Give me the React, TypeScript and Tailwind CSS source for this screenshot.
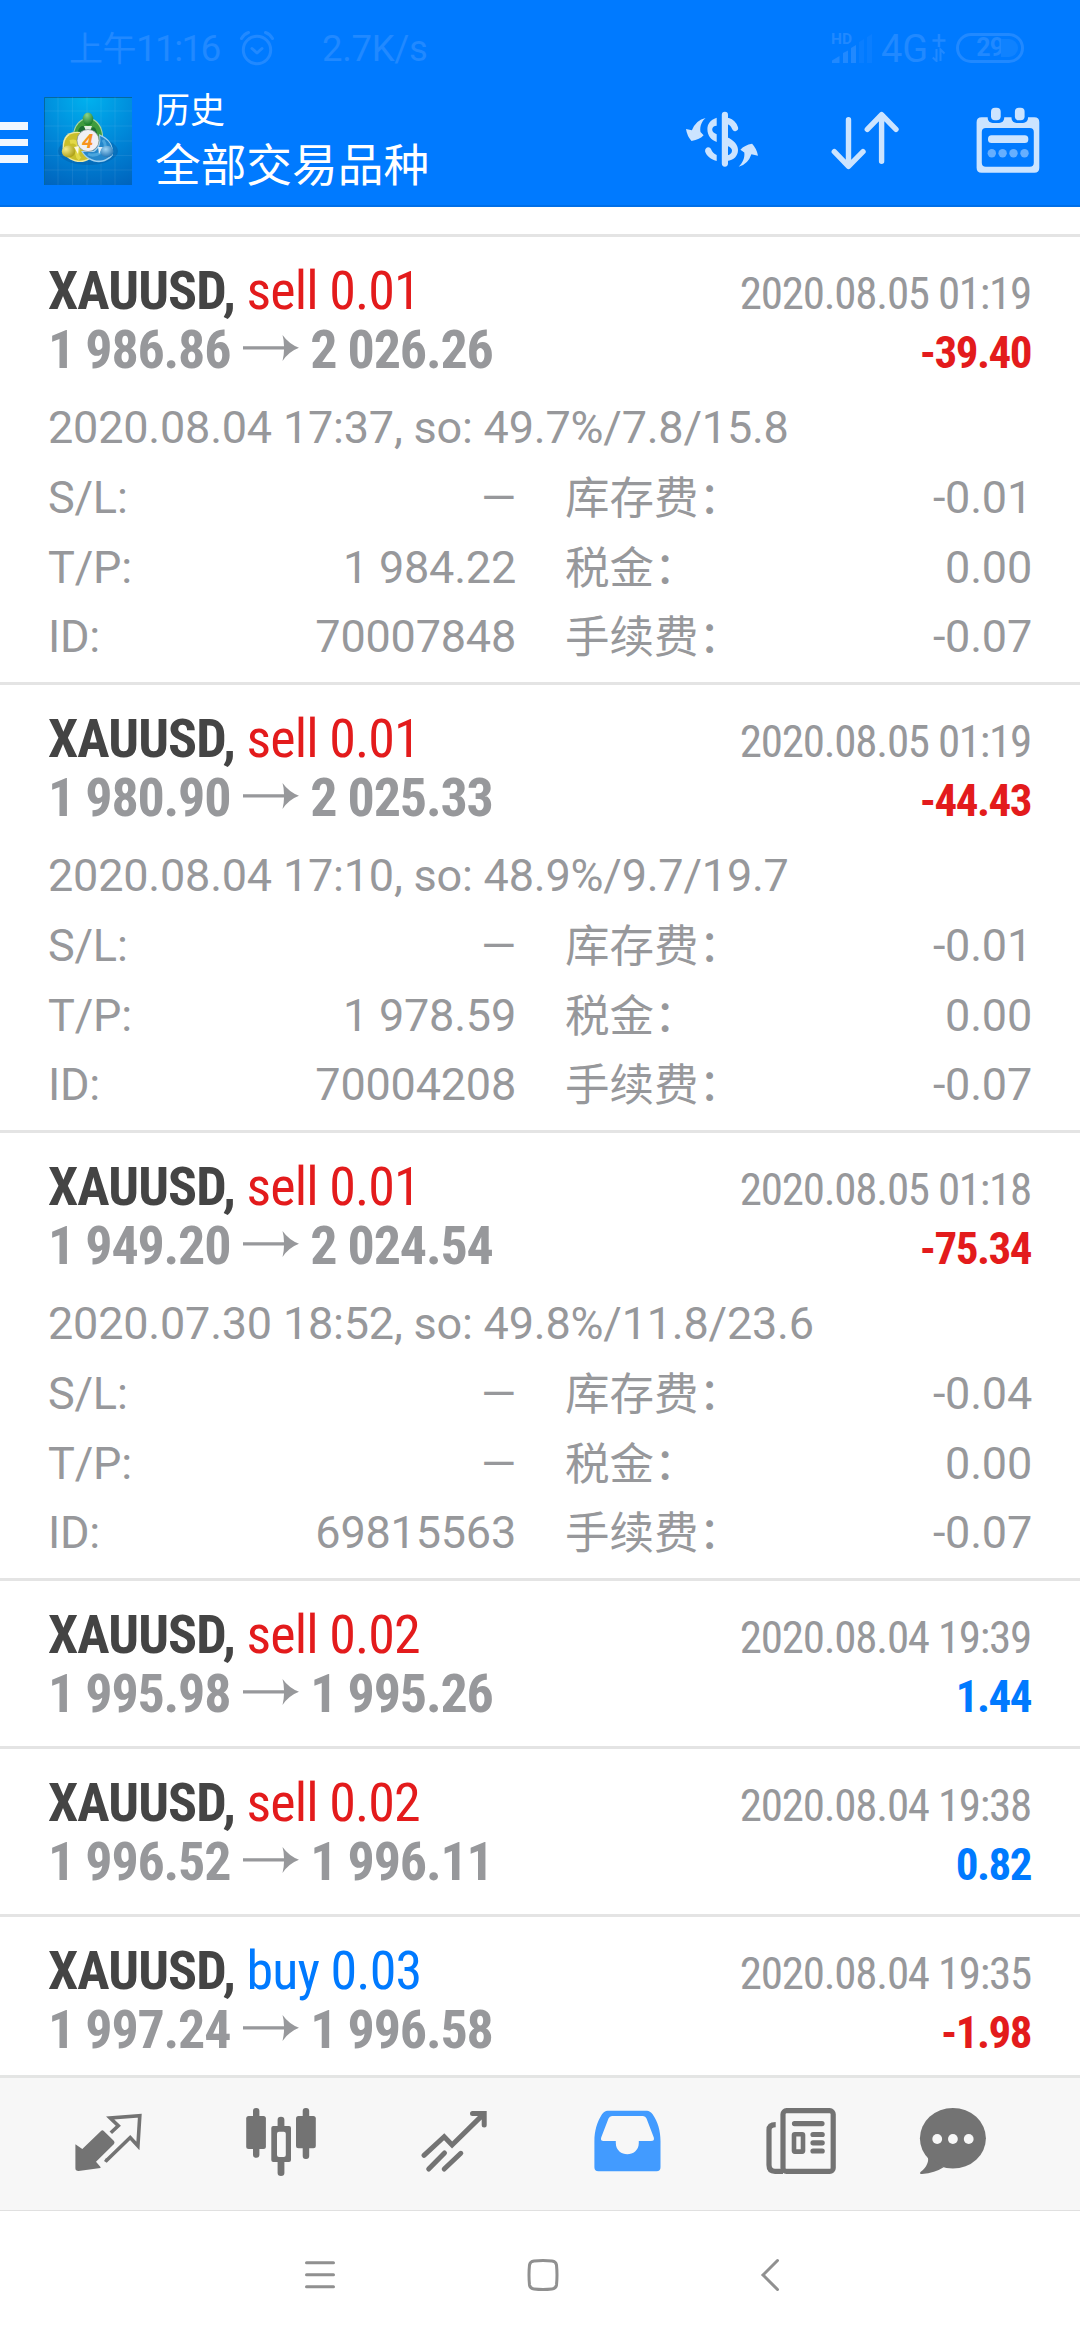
interface Deal {
    id: string;
    side: 'sell' | 'buy';
    volume: string;
    open: string;
    close: string;
    time: string;
    profit: string;
    details?: {
        comment: string;
        sl: string;
        tp: string;
        swap: string;
        tax: string;
        fee: string;
    };
}

const deals: Deal[] = [
    {id: '70007848', side: 'sell', volume: '0.01', open: '1 986.86', close: '2 026.26', time: '2020.08.05 01:19', profit: '-39.40', details: {comment: '2020.08.04 17:37, so: 49.7%/7.8/15.8', sl: '—', tp: '1 984.22', swap: '-0.01', tax: '0.00', fee: '-0.07'}},
    {id: '70004208', side: 'sell', volume: '0.01', open: '1 980.90', close: '2 025.33', time: '2020.08.05 01:19', profit: '-44.43', details: {comment: '2020.08.04 17:10, so: 48.9%/9.7/19.7', sl: '—', tp: '1 978.59', swap: '-0.01', tax: '0.00', fee: '-0.07'}},
    {id: '69815563', side: 'sell', volume: '0.01', open: '1 949.20', close: '2 024.54', time: '2020.08.05 01:18', profit: '-75.34', details: {comment: '2020.07.30 18:52, so: 49.8%/11.8/23.6', sl: '—', tp: '—', swap: '-0.04', tax: '0.00', fee: '-0.07'}},
    {id: 'd4', side: 'sell', volume: '0.02', open: '1 995.98', close: '1 995.26', time: '2020.08.04 19:39', profit: '1.44'},
    {id: 'd5', side: 'sell', volume: '0.02', open: '1 996.52', close: '1 996.11', time: '2020.08.04 19:38', profit: '0.82'},
    {id: 'd6', side: 'buy', volume: '0.03', open: '1 997.24', close: '1 996.58', time: '2020.08.04 19:35', profit: '-1.98'},
];

function StatusBar() {
    return (
        <div className="flex h-[86px] items-center pt-[9px] pl-[69px] text-[#2189ff]">
            <span className="w-[153px] pt-[2px] whitespace-nowrap text-[37px] leading-[44px] tracking-[-1.700px]">
                <span className="text-[34px] tracking-[-0.500px]">上午</span>11:16
            </span>
            <svg className="ml-[17px]" width="36" height="36" viewBox="0 0 36 36" fill="none" stroke="currentColor" strokeWidth="3" strokeLinecap="round" strokeLinejoin="round">
                <circle cx="18" cy="20" r="13.7" />
                <path d="M2.5 8.5 Q5 4 9.500 2.500 M26.500 2.500 Q31 4 33.500 8.500 M13 18.500 L18 23 L23 18.500" />
            </svg>
            <span className="ml-[47px] w-[104px] pt-[2px] whitespace-nowrap text-[36.500px] leading-[44px] tracking-[-0.300px]">2.7K/s</span>
            <svg className="ml-[405px]" width="42" height="34" viewBox="0 0 42 34" fill="currentColor">
                <text x="0" y="13" fontSize="15.500" fontWeight="700" fontFamily="Roboto">HD</text>
                <path d="M1 32 V29.500 L8.500 25 V32Z M12 32 V22 L17 19.500 V32Z M20 32 V17 L25 14 V32Z" />
                <path opacity="0.3" d="M28 32 V11 L33 8 V32Z M36 32 V6 L41 3 V32Z" />
            </svg>
            <span className="ml-[8px] w-[49px] pt-[2px] text-[38px] leading-[44px]">4G</span>
            <svg className="ml-[2px]" width="14" height="28" viewBox="0 0 14 28" fill="none" stroke="currentColor" strokeWidth="2.500">
                <path d="M7 0 V13 M.5 6.500 H13.500" />
                <path strokeWidth="2" d="M4.500 15 V27 L.8 23.500 M8.500 27 V15.500 L12.500 19.500" />
            </svg>
            <div className="ml-[10px] flex h-[30px] w-[68px] items-center justify-end rounded-full border-[3px] border-[#2189ff] pr-[3px] text-[25px] leading-[24px] font-bold tracking-[-1px]">
                29
                <div className="-ml-[2px] h-[18px] w-[17px] rounded-r-full bg-[#0f82ff]" />
            </div>
        </div>
    );
}

function AppLogo() {
    return (
        <svg width="88" height="88" viewBox="0 0 88 88">
            <defs>
                <radialGradient id="sky" cx=".5" cy="0" r="1.1">
                    <stop offset="0" stopColor="#00b2ef" />
                    <stop offset=".55" stopColor="#0086d8" />
                    <stop offset="1" stopColor="#0064bd" />
                </radialGradient>
                <radialGradient id="green" cx=".4" cy=".2" r=".8"><stop offset="0" stopColor="#8fd48c" /><stop offset="1" stopColor="#147a26" /></radialGradient>
                <radialGradient id="yellow" cx=".3" cy=".3" r=".8"><stop offset="0" stopColor="#f4ec8c" /><stop offset="1" stopColor="#a89a10" /></radialGradient>
                <radialGradient id="blue" cx=".4" cy=".3" r=".8"><stop offset="0" stopColor="#9fd4f4" /><stop offset="1" stopColor="#1267ac" /></radialGradient>
            </defs>
            <rect width="88" height="88" fill="url(#sky)" />
            <path d="M.5 88 V.5 H88" fill="none" stroke="#05699f" />
            <path d="M14 0V88M28.500 0V88M43 0V88M57 0V88M71 0V88M0 14H88M0 29H88M0 44H88M0 58.500H88M0 73H88" stroke="#fff" strokeOpacity=".07" />
            <ellipse cx="44" cy="54" rx="30" ry="14" fill="#06498a" opacity=".3" />
            <path d="M29 42 C28 30 35 21 44 21 S60 30 59 43 L54 49 L35 45Z" fill="#a9d6a0" />
            <path d="M30 42 C29 31 36 22 44 22 S59 31 58 43 L53 48 L35 44Z" fill="#3f9c3d" />
            <path d="M34 34 C36 28 40 28 41 31 C42 35 46 35 48 31 C51 28 54 34 53 43 H35Z" fill="#1d6e34" />
            <path d="M36 35 C22 33 17 42 19 55 C24 65 38 68 46 62 L40 45Z" fill="#eee9a0" />
            <path d="M36 36 C23 35 19 43 20 54 C25 64 37 66 45 61 L40 45Z" fill="#c9bf2b" />
            <path d="M26 45 Q33 43 35 50 Q31 58 36 62" fill="none" stroke="#e3d948" strokeWidth="4" />
            <path d="M55 37 C65 41 70 48 69 58 C61 69 44 67 37 54 L49 54 C55 50 56 45 55 37Z" fill="#9dcff0" />
            <path d="M56 39 C65 43 69 49 68 57 C60 67 46 65 39 55 L50 55 C56 51 57 46 56 39Z" fill="#2587cb" />
            <path d="M59 43 Q64 50 58 55 Q50 60 44 57" fill="none" stroke="#4aa5dd" strokeWidth="3" />
            <path d="M40 29 H48 L46 34 H42Z M30 50 L35 49 L34 57Z M54 50 L59 50 L55 57Z" fill="#fff" opacity=".85" />
            <ellipse cx="44" cy="22" rx="5.300" ry="6.500" fill="url(#green)" />
            <ellipse cx="24.500" cy="54.500" rx="6.700" ry="6" fill="url(#yellow)" />
            <ellipse cx="63" cy="54.500" rx="6.500" ry="5.700" fill="url(#blue)" />
            <circle cx="44" cy="43.500" r="11" fill="#eff0f3" stroke="#6b7c80" strokeWidth=".6" />
            <text x="43.500" y="50.500" textAnchor="middle" fontFamily="Open Sans" fontStyle="italic" fontWeight="700" fontSize="19.500" fill="#f7941d">4</text>
        </svg>
    );
}

function AppBar() {
    return (
        <div className="flex h-[121px] items-start">
            <div className="flex w-7 flex-col gap-[9px] pt-[36px]">
                <div className="h-[7.500px] bg-[#f0f7ff]" />
                <div className="h-[7.500px] bg-[#f0f7ff]" />
                <div className="h-[7.500px] bg-[#f0f7ff]" />
            </div>
            <div className="ml-4 pt-[11px]">
                <AppLogo />
            </div>
            <div className="ml-[23px] w-[529px] pt-[6px] text-white">
                <p className="text-[35px] leading-[40px]">历史</p>
                <p className="mt-[5px] text-[45.700px] leading-[60px]">全部交易品种</p>
            </div>
            <svg className="mt-[22px]" width="76" height="60" viewBox="0 0 76 60" fill="#cce4ff">
                <path d="M40.900 6.800 V55.600 M44 13 Q49 14.500 51 20" fill="none" stroke="#cce4ff" strokeWidth="6.200" strokeLinecap="round" />
                <path d="M43 29.300 C50 32 54 37 54 42 C54 48 50 52 43 53 V47.600 C46.500 46.500 48 45 48 42.500 C48 40.500 46.500 39 43 37.700Z" />
                <path d="M32.700 9.700 C26 12 23.400 16 23.400 21.300 C23.400 27.500 27 32 32.700 34 V26.300 C29.800 25 28.200 24 28.200 21.500 C28.200 19 30 18 32.700 17.700Z" />
                <path d="M32.700 53 C26 51 22.500 47.500 21.100 43.500 C20.500 39.500 25.500 37.500 27.200 41.500 C28.200 44 30 46 32.700 47Z" />
                <path d="M21.600 10 C18 13 15.500 18 16.500 24 L19.600 27.300 Q16 31.500 7.500 33 Q3 28 2 21 L7.900 22.300 Q12 12 21.600 10Z" />
                <path d="M54.700 58.700 C58.500 55 61 50 60.300 44.500 L56.400 41.700 Q60.500 37 68.100 35.700 Q73 41 74 47.700 L67.400 46.300 Q64 56.500 54.700 58.700Z" />
            </svg>
            <svg className="mt-[24px] ml-[70px]" width="70" height="60" viewBox="0 0 70 60" fill="none" stroke="#cce4ff" strokeWidth="5.400" strokeLinecap="round" strokeLinejoin="round">
                <path d="M18.500 9.700 V56 M4.300 41.700 L18.500 56.300 L33 41.700" />
                <path d="M51.600 51.300 V5 M37.300 19.300 L51.600 4.600 L66 19.300" />
            </svg>
            <svg className="mt-[21px] ml-[76px]" width="64" height="66" viewBox="0 0 64 66">
                <path fillRule="evenodd" fill="#cce4ff" d="M5.600 10.300 H58.300 Q63.300 10.300 63.300 15.300 V60.700 Q63.300 65.700 58.300 65.700 H5.600 Q.6 65.700 .6 60.700 V15.300 Q.6 10.300 5.600 10.300Z M9.800 21 Q5.800 21 5.800 25 V55.700 Q5.800 59.700 9.800 59.700 H53.800 Q57.800 59.700 57.800 55.700 V25 Q57.800 21 53.800 21Z" />
                <rect x="11.700" y="4" width="16.500" height="12" rx="5" fill="#007aff" />
                <rect x="35.500" y="4" width="16.500" height="12" rx="5" fill="#007aff" />
                <rect x="15" y=".7" width="9.700" height="12.600" rx="4" fill="#cce4ff" />
                <rect x="38.900" y=".7" width="9.700" height="12.600" rx="4" fill="#cce4ff" />
                <rect x="12" y="28.300" width="40.300" height="7.700" rx="3.500" fill="#cce4ff" />
                <g fill="#66afff">
                    <circle cx="15.800" cy="46.300" r="4.200" />
                    <circle cx="26.600" cy="46.300" r="4.200" />
                    <circle cx="37.500" cy="46.300" r="4.200" />
                    <circle cx="48.500" cy="46.300" r="4.200" />
                </g>
            </svg>
        </div>
    );
}

function DetailRow({label, value, label2, value2}: {label: string; value: string; label2: string; value2: string}) {
    return (
        <div className="flex h-[69.500px] leading-[70px]">
            <span>{label}</span>
            <span className="ml-auto">{value}</span>
            <div className="ml-[49px] flex w-[467px] justify-between">
                <span className="pt-px text-[44.500px] tracking-normal">{label2}</span>
                <span>{value2}</span>
            </div>
        </div>
    );
}

function DealCard({deal}: {deal: Deal}) {
    const d = deal.details;
    return (
        <div className={`shrink-0 border-t-[3px] border-[#e4e4e4] px-12 pt-[24px] text-[#97989b] ${d ? 'h-[448px]' : 'h-[168px]'}`}>
            <div className="flex h-[59px] items-baseline justify-between font-['Roboto_Condensed'] leading-[59px]">
                <p className="text-[54px] tracking-[-0.900px]">
                    <span className="font-bold text-[#444]">XAUUSD, </span>
                    <span className={deal.side === 'sell' ? 'text-[#e31b1c]' : 'text-[#007aff]'}>{deal.side} {deal.volume}</span>
                </p>
                <p className="pr-px text-[45px] tracking-[-1.250px]">{deal.time}</p>
            </div>
            <div className="flex h-[59px] items-baseline justify-between font-['Roboto_Condensed'] leading-[59px] font-bold">
                <p className="flex items-baseline text-[54px] tracking-[-1.200px]">
                    {deal.open}
                    <svg className="mr-[11px] ml-[13px]" width="56" height="33" viewBox="0 0 56 33" fill="currentColor">
                        <path d="M0 11.200 H41 Q41 5 39.500 0 Q46 9 56 12.800 Q46 16.500 39.500 26 Q41 20 41 14.400 H0Z" />
                    </svg>
                    {deal.close}
                </p>
                <p className={`pr-px text-[45px] tracking-[-1.500px] ${deal.profit.startsWith('-') ? 'text-[#e31b1c]' : 'text-[#007aff]'}`}>{deal.profit}</p>
            </div>
            {d && (
                <div className="pt-[14px] text-[45px] tracking-[-0.210px]">
                    <p className="h-[70px] leading-[70px]">{d.comment}</p>
                    <DetailRow label="S/L:" value={d.sl} label2="库存费：" value2={d.swap} />
                    <DetailRow label="T/P:" value={d.tp} label2="税金：" value2={d.tax} />
                    <DetailRow label="ID:" value={deal.id} label2="手续费：" value2={d.fee} />
                </div>
            )}
        </div>
    );
}

function TabBar() {
    return (
        <div className="flex h-[136px] shrink-0 items-start border-t-[3px] border-b border-t-[#e4e5e4] border-b-[#e0e0e0] bg-[#f7f7f7] pt-[30px] text-[#737373]">
            <svg className="ml-[75px]" width="67" height="68" viewBox="0 0 67 68">
                <path fill="currentColor" d="M.4 36.300 L7.300 41 L26 23 Q27.300 21.500 28.800 23 L39 33 Q40 34.700 39 36 L21 53.700 L25.500 59 V60 L3.500 63 Q.4 63 .4 60.300Z" />
                <path fill="none" stroke="currentColor" strokeWidth="3.600" d="M35.800 24.800 L43.300 17.700 L35.200 10 L64.800 7.600 L62.900 38 L55.200 29.500 L31.500 52.500 L30 51.500" />
            </svg>
            <svg className="ml-[104px]" width="70" height="68" viewBox="0 0 70 68" fill="currentColor">
                <rect x=".2" y="8" width="19.700" height="33" rx="2.500" />
                <rect x="7" y="0" width="6.400" height="49.700" rx="3" />
                <rect x="50" y="8" width="19.800" height="32.300" rx="2.500" />
                <rect x="56.700" y="0" width="6.500" height="51" rx="3" />
                <path fillRule="evenodd" d="M27.300 18 H43 Q45 18 45 20 V52 Q45 54 43 54 H27.300 Q25.300 54 25.300 52 V20 Q25.300 18 27.300 18Z M33 23.700 Q31 23.700 31 25.700 V47 Q31 49 33 49 H37.800 Q39.800 49 39.800 47 V25.700 Q39.800 23.700 37.800 23.700Z" />
                <path d="M31.600 19 V11.700 Q31.600 8.700 35 8.700 T38.400 11.700 V19Z M31.600 53 V65 Q31.600 68 35 68 T38.400 65 V53Z" />
            </svg>
            <svg className="ml-[105px]" width="67" height="68" viewBox="0 0 67 68" fill="none" stroke="currentColor" strokeWidth="5" strokeLinecap="round">
                <path d="M3 47.300 L23.200 28.700 L31.100 37 L63 5.600 M51.500 5.500 H63.200 V17" />
                <path d="M7.700 61 L23.500 45 M23.200 61 L39.800 45.300" />
            </svg>
            <svg className="ml-[106px]" width="67" height="68" viewBox="0 0 67 68">
                <path fillRule="evenodd" fill="#429bff" d="M13.500 2.700 H53 Q56 2.700 58.600 6.300 C64 14 66.500 23 66.500 33 V59.300 Q66.500 63.300 62.500 63.300 H4.400 Q.4 63.300 .4 59.300 V33 C.4 23 3 14 8 6.300 Q10.500 2.700 13.500 2.700Z M18 8 Q15.500 8 14.500 10.500 L7.200 29.500 Q6.200 33 9.500 33 H21.800 V35 C22 50 44.600 50 44.800 35 V33 H57 Q60.800 33 59.800 29.500 L52.500 10.500 Q51.500 8 49 8Z" />
            </svg>
            <svg className="ml-[105px]" width="70" height="68" viewBox="0 0 70 68" fill="none" stroke="currentColor" strokeWidth="5.200">
                <rect x="17" y="2.700" width="50.200" height="60.700" rx="3.500" />
                <path d="M9.700 16.600 Q3 16.600 3 22 V57 Q3 63.300 9 63.300 H17" />
                <rect x="28" y="26.200" width="9" height="17.400" rx=".8" strokeWidth="4.600" />
                <path strokeLinecap="round" d="M28.500 15.600 H56 M47 26.500 H56.200 M47 34.800 H56.200 M47 43 H56.200" />
            </svg>
            <svg className="ml-[83px]" width="68" height="68" viewBox="0 0 68 68" fill="currentColor">
                <ellipse cx="33.900" cy="30.300" rx="33" ry="30.300" />
                <path d="M8 48 Q10 51 8.500 55 Q6.500 60.500 1.500 64 Q0 66 3 66 Q16 65 24.600 59.300Z" />
                <g fill="#f7f7f7">
                    <circle cx="18.200" cy="31" r="4.900" />
                    <circle cx="33.900" cy="31" r="4.900" />
                    <circle cx="49.700" cy="31" r="4.900" />
                </g>
            </svg>
        </div>
    );
}

function SystemNav() {
    return (
        <div className="flex h-[129px] shrink-0 items-start bg-white pt-[46px] text-[#909090]">
            <svg className="ml-[304px]" width="32" height="36" viewBox="0 0 32 36" stroke="currentColor" strokeWidth="3" strokeLinecap="round">
                <path d="M2.500 5.700 H29.500 M2.500 17.700 H29.500 M2.500 29.700 H29.500" />
            </svg>
            <svg className="ml-[190px]" width="34" height="36" viewBox="0 0 34 36" fill="none" stroke="currentColor" strokeWidth="3">
                <path d="M8 4 Q17 3 26 4 Q30 4.500 30.500 8 Q31.500 18 30.500 28 Q30 31.500 26 32 Q17 33 8 32 Q4 31.500 3.500 28 Q2.500 18 3.500 8 Q4 4.500 8 4Z" />
            </svg>
            <svg className="ml-[200px]" width="22" height="36" viewBox="0 0 22 36" fill="none" stroke="currentColor" strokeWidth="3" strokeLinecap="round">
                <path d="M17.500 3.500 L3 18 L17.500 32.500" />
            </svg>
        </div>
    );
}

function App() {
    return (
        <div className="flex h-[2340px] w-[1080px] flex-col overflow-hidden bg-white font-['Roboto','Noto_Sans_CJK_SC',sans-serif]">
            <div className="h-[207px] shrink-0 border-b-2 border-[#006fe8] bg-[#007aff]">
                <StatusBar />
                <AppBar />
            </div>
            <div className="flex h-[1868px] shrink-0 flex-col overflow-hidden pt-[27px]">
                {deals.map(deal => (
                    <DealCard key={deal.id} deal={deal} />
                ))}
            </div>
            <TabBar />
            <SystemNav />
        </div>
    );
}

export default App;
